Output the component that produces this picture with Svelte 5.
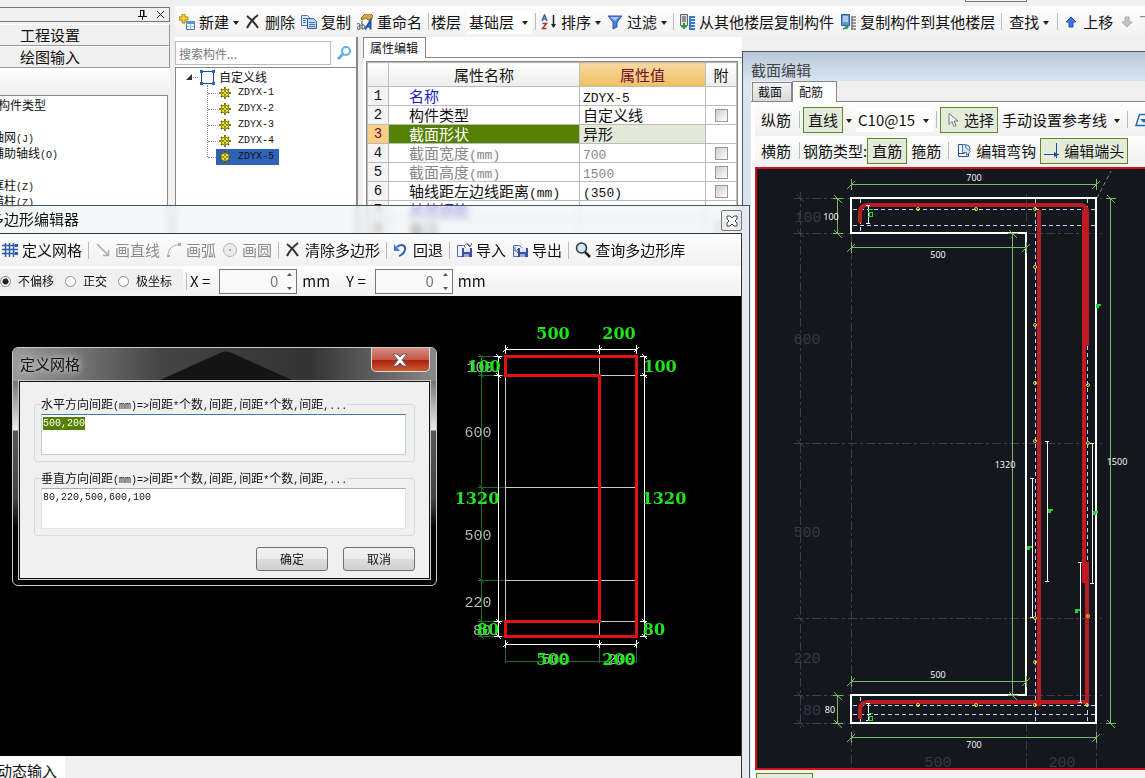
<script>
  import { onMount } from 'svelte';

  let horizontal = $state('500,200');
  let vertical = $state('80,220,500,600,100');
  let offsetMode = $state('none');
  let offsetX = $state(0);
  let offsetY = $state(0);
  let selected = $state('ZDYX-5');
  let horizontalBox;

  const components = ['ZDYX-1', 'ZDYX-2', 'ZDYX-3', 'ZDYX-4', 'ZDYX-5'];
  const navItems = ['构件类型', '', '轴网(J)', '辅助轴线(O)', '', '框柱(Z)', '暗柱(Z)'];

  const properties = [
    { name: '名称', value: 'ZDYX-5', kind: 'link' },
    { name: '构件类型', value: '自定义线', check: true },
    { name: '截面形状', value: '异形', kind: 'current' },
    { name: '截面宽度(mm)', value: '700', kind: 'muted', check: true },
    { name: '截面高度(mm)', value: '1500', kind: 'muted', check: true },
    { name: '轴线距左边线距离(mm)', value: '(350)', check: true },
    { name: '其他钢筋', value: '', kind: 'link' },
    { name: '备注', value: '', check: true },
  ];

  const modes = [
    { value: 'none', label: '不偏移' },
    { value: 'ortho', label: '正交' },
    { value: 'polar', label: '极坐标' },
  ];

  // Polygon editor drawing
  const gridRows = [375, 487, 580, 621];
  const greenTicks = [356, 375, 487, 580, 621, 636];
  const whiteTicks = [356, 375, 621, 636];
  const polyCols = [505, 599, 636];
  const boldLabels = [
    [553, 339, '500'], [619, 339, '200'], [484, 372, '100'], [660, 372, '100'],
    [477, 504, '1320'], [664, 504, '1320'], [488, 635, '80'], [654, 635, '80'],
    [553, 665, '500'], [619, 665, '200'],
  ];
  const thinLabels = [
    [480, 372, '100'], [478, 437, '600'], [478, 540, '500'], [478, 607, '220'],
    [482, 635, '80'], [555, 664, '500'], [621, 664, '200'],
  ];

  // Section drawing
  const axisRows = [198, 233, 443, 618, 695, 723];
  const axisLabels = [
    [808, 222, '100'], [807, 344, '600'], [807, 537, '500'], [807, 663, '220'],
    [812, 715, '80'], [938, 767, '500'], [1062, 767, '200'],
  ];
  const dims = [
    [851, 184, 1096, 184], [851, 247, 1026, 247], [851, 681, 1026, 681], [851, 737, 1096, 737],
    [837, 198, 837, 233], [837, 695, 837, 723], [1012, 233, 1012, 695], [1110, 198, 1110, 723],
  ];
  const dimLabels = [
    [974, 181, '700'], [831, 220, '100'], [938, 258, '500'], [1005, 468, '1320'],
    [1117, 465, '1500'], [938, 678, '500'], [830, 713, '80'], [974, 748, '700'],
  ];
  const dots = [
    [918, 209], [976, 209], [1035, 209], [1035, 267], [1035, 325], [1035, 383], [1035, 441],
    [1035, 618], [1035, 662], [1035, 705], [1088, 385], [1088, 443], [1088, 616],
    [918, 705], [976, 705], [1087, 705],
  ];
  const brackets = [
    [868, 205, 224], [868, 703, 721], [1047, 441, 582], [1032, 478, 618],
    [1092, 443, 584], [1080, 562, 703],
  ];
  const marks = [[1096, 306], [1048, 511], [1093, 513], [1027, 548], [1075, 611]];

  onMount(() => {
    horizontalBox.focus();
    horizontalBox.select();
  });
</script>

{#snippet mixed(text)}
  {#each text.split(/([\x20-\x7e]+)/) as part, i}{#if i % 2}<span class="latin">{part}</span>{:else}{part}{/if}{/each}
{/snippet}

{#snippet caret()}
  <svg class="caret" width="6" height="4" viewBox="0 0 6 4"><path d="M0 0h6L3 4z" fill="#222" /></svg>
{/snippet}

{#snippet icon(name)}
  <svg class="icon" width="16" height="16" viewBox="0 0 16 16" fill="none" aria-hidden="true">
    {#if name === 'new'}
      <path d="M3 0h3v3h3v3H6v3H3V6H0V3h3z" fill="#f2cf33" stroke="#a8831b" />
      <path d="M7.5 7.5h8v8h-8z" fill="#fff" stroke="#4377b8" />
      <path d="M7 7h9v3H7z" fill="#5b95d8" />
      <path d="M8 12.5h7M11.5 10v5" stroke="#9abce3" />
    {:else if name === 'delete'}
      <path d="M2 2c4 3 8 7 11 12M13 1C9 4 5 8 2 14" stroke="#333" stroke-width="2" />
    {:else if name === 'copy'}
      <path d="M.5 1.500h6l2 2v8h-8z" fill="#dbe9fb" stroke="#4a78b5" />
      <path d="M6.500 4.500h6l3 3v7h-9z" fill="#c4dbf8" stroke="#2b5ca5" />
      <path d="M2 4.500h4M2 6.500h3M2 8.500h3M8 8.500h6M8 10.500h6M8 12.500h6" stroke="#3f74bd" />
    {:else if name === 'rename'}
      <path d="M4 4l4-4h6l2 2-2 4h-3L9 4 5 6z" fill="#d9a93d" stroke="#8a6a1d" />
      <path d="M0 10c3-1 3 0 3 2v3M3 12c-4 0-4 4 0 3M5 7v8c4 0 4-5 0-4" stroke="#444" />
      <path d="M8 15.500l5.500-9v9M10 12.500h4" stroke="#1d4fae" stroke-width="2" />
    {:else if name === 'sort'}
      <path d="M1 7l2.500-6L6 7M2 5h3" stroke="#3763b5" stroke-width="1.500" />
      <path d="M1.500 9.500h4l-4 5h4" stroke="#a33" stroke-width="1.500" />
      <path d="M12.500 1v12" stroke="#222" stroke-width="1.500" />
      <path d="M10 10h5l-2.500 4z" fill="#222" />
    {:else if name === 'filter'}
      <path d="M1 2h14l-5 6v5l-4 2V8z" fill="#4a7fe0" stroke="#2c58ad" />
      <path d="M3 3h9L8 7z" fill="#a9c6fb" />
    {:else if name === 'from'}
      <path d="M1.500.5h7v11h-7z" fill="#ddd" stroke="#666" />
      <path d="M3 3h4M3 5h4M3 7h4" stroke="#444" />
      <path d="M5 9v6M2 12.500h6" stroke="#1d9c45" stroke-width="2" />
      <path d="M10 3h6M10 6h6M10 9h6M10 12h6M10 15h6M11 3v12" stroke="#3c78c8" stroke-width="2" />
    {:else if name === 'to'}
      <path d="M1.500.5h8v11h-8z" fill="#5f94de" stroke="#2a5da8" />
      <path d="M3 3h5M3 5h5M3 7h5" stroke="#fff" />
      <path d="M3 15l5-4v3z" fill="#1d9c45" stroke="#1d9c45" />
      <path d="M11 3h5M11 6h5M11 9h5M11 12h5M11 15h5M12 3v12" stroke="#777" stroke-width="1.500" />
    {:else if name === 'up'}
      <path d="M8 3l5 5h-3v5H6V8H3z" fill="#3f76e4" stroke="#2450ad" />
    {:else if name === 'down'}
      <path d="M8 13L3 8h3V3h4v5h3z" fill="#c4c4c4" stroke="#aaa" />
    {:else if name === 'grid'}
      <path d="M0 3.500h16M0 7.500h16M0 11.500h14M3.500 1v14M7.500 1v14M11.500 1v14" stroke="#2a5caa" stroke-width="1.500" />
      <path d="M13 2h3v3h-3zM13 10h3v3h-3z" fill="#2a5caa" />
    {:else if name === 'line'}
      <path d="M2 2l11 11M13.500 8v5.500H8" stroke="#aaa" stroke-width="1.500" />
    {:else if name === 'arc'}
      <path d="M2 14C2 7 6 3 13 3" stroke="#aaa" />
      <path d="M1 13h3v2H1zM12 1h3v3h-3z" fill="#aaa" />
    {:else if name === 'circle'}
      <circle cx="8" cy="8" r="6.500" fill="#ebebeb" stroke="#b4b4b4" />
      <circle cx="8" cy="8" r="1" fill="#999" />
    {:else if name === 'undo'}
      <path d="M4 5c5-4 9-1 8 3-1 3-3 5-6 6" stroke="#2c62b8" stroke-width="2" />
      <path d="M1 2v7h6z" fill="#3d7ad6" />
    {:else if name === 'import' || name === 'export'}
      <path d="M1.500 3.500h6l2 2v9h-8z" fill="#eef3fb" stroke="#4a6fae" />
      {#if name === 'import'}
        <path d="M8 4c2-3 5-3 6 1M11 2l3 3 2-4" stroke="#555" />
      {:else}
        <path d="M3 5v4h4M5 7l2 2-2 2" stroke="#2a5caa" />
      {/if}
      <path d="M6 6h10v9H6z" fill="#3b50a3" />
      <path d="M8 6h6v4H8z" fill="#dfe6f5" />
      <path d="M8 12h5v3H8z" fill="#9aa8d2" />
    {:else if name === 'search'}
      <circle cx="6.500" cy="6" r="5" fill="#cfe9f8" stroke="#333" stroke-width="1.500" />
      <path d="M10 10l5 5" stroke="#222" stroke-width="2.500" />
    {:else if name === 'find'}
      <circle cx="10" cy="6" r="4" stroke="#5fb0ea" stroke-width="2" />
      <path d="M7 9l-5 5" stroke="#5fb0ea" stroke-width="3" />
    {:else if name === 'pointer'}
      <path d="M5 1.500v11l3-3 2 5 2-1-2-4.500h4z" fill="#fff" stroke="#777" />
    {:else if name === 'hook'}
      <path d="M6.500 1.500h-4v12h10v-3M2.500 10.500h6" stroke="#2a4fa0" />
      <path d="M6.500 1.500h3v3l5 4-4 4v-3h-4z" fill="#d9e5f7" stroke="#4a78b5" />
      <path d="M10 2c3 0 4 2 4 5" stroke="#2a4fa0" />
    {:else if name === 'end'}
      <path d="M0 11.500h15M12.500 0v15" stroke="#1d4f9c" />
      <path d="M10 9l5 2.500L10 14z" fill="#1d4f9c" />
    {:else if name === 'edge'}
      <path d="M4.500 2.500h11M4.500 2.500L1 13.500h14" stroke="#1d6fb0" stroke-width="1.500" />
      <path d="M5 7h7l-3 4z" fill="#1d6fb0" />
    {/if}
  </svg>
{/snippet}

{#snippet tool(name, label, state = '', drop = false)}
  <button class="tool {state}" disabled={state === 'off'}>
    {#if name}{@render icon(name)}{/if}
    {#if label}<span>{label}</span>{/if}
    {#if drop}{@render caret()}{/if}
  </button>
{/snippet}

<div class="app">
  <nav class="nav">
    <div class="nav-head">
      <button class="plain" aria-label="固定">
        <svg width="9" height="10" viewBox="0 0 9 10" fill="none" stroke="#111"><path d="M2.500 0v6M2 .5h4M6 0v6M5.500 0v6M0 6.500h9M4.500 7v3" /></svg>
      </button>
      <button class="plain" aria-label="关闭">
        <svg width="9" height="9" viewBox="0 0 9 9" stroke="#222"><path d="M1 1l7 7M8 1L1 8" /></svg>
      </button>
    </div>
    <button class="nav-button">工程设置</button>
    <button class="nav-button">绘图输入</button>
    <div class="nav-bar"></div>
    <ul class="nav-list small">
      {#each navItems as item, i}
        <li class:first={i === 0}>{@render mixed(item)}</li>
      {/each}
    </ul>
  </nav>

  <main class="main">
    <div class="strip"><span></span></div>
    <div class="toolbar">
      {@render tool('new', '新建', '', true)}
      {@render tool('delete', '删除')}
      {@render tool('copy', '复制')}
      {@render tool('rename', '重命名')}
      <i class="sep"></i>
      <label for="floor">楼层</label>
      <span class="combo">
        <select id="floor"><option>基础层</option></select>
        {@render caret()}
      </span>
      <i class="sep"></i>
      {@render tool('sort', '排序', '', true)}
      {@render tool('filter', '过滤', '', true)}
      <i class="sep"></i>
      {@render tool('from', '从其他楼层复制构件')}
      {@render tool('to', '复制构件到其他楼层')}
      <i class="sep"></i>
      {@render tool('', '查找', 'pad', true)}
      <i class="sep"></i>
      {@render tool('up', '上移')}
      {@render tool('down', '下移', 'off')}
    </div>

    <div class="panels">
      <section class="tree small">
        <div class="search">
          <input type="search" placeholder="搜索构件..." aria-label="搜索构件" />
          <button class="plain" aria-label="搜索">{@render icon('find')}</button>
        </div>
        <div class="tree-box">
          <div class="root">
            <svg width="7" height="7" viewBox="0 0 7 7"><path d="M6 0v6H0z" fill="#333" /></svg>
            <svg width="22" height="15" viewBox="0 0 22 15" fill="none">
              <path d="M0 7.500h5" stroke="#888" stroke-dasharray="1 1" />
              <path d="M8.500 1.500h12v12h-12z" stroke="#1a4fa0" />
              <path d="M7 0h3v3H7zM19 0h3v3h-3zM7 12h3v3H7zM19 12h3v3h-3z" fill="#2a62b8" />
            </svg>
            <span>自定义线</span>
          </div>
          <ul>
            {#each components as name}
              <li>
                <button class="node" class:active={selected === name} onclick={() => (selected = name)}>
                  <svg width="12" height="12" viewBox="0 0 12 12">
                    <path d="M6 0v12M0 6h12M2 2l8 8M10 2l-8 8" stroke="#4a4700" stroke-width="1.500" />
                    <circle cx="6" cy="6" r="4" fill="#f0e92e" stroke="#8a8400" />
                    <path d="M6 3v6M3 6h6" stroke="#3a3800" />
                    <circle cx="6" cy="6" r="1" fill="#fff86b" />
                  </svg>
                  <span class="latin">{name}</span>
                </button>
              </li>
            {/each}
          </ul>
        </div>
      </section>

      <section class="props">
        <div class="tabs"><button class="tab active">属性编辑</button></div>
        <div class="table-box">
          <table>
            <thead>
              <tr><th class="num"></th><th>属性名称</th><th class="value">属性值</th><th class="extra">附</th></tr>
            </thead>
            <tbody>
              {#each properties as row, i}
                <tr class={row.kind}>
                  <td class="num">{i + 1}</td>
                  <td class="name">{@render mixed(row.name)}</td>
                  <td class="value">{@render mixed(row.value)}</td>
                  <td class="extra">{#if row.check}<input type="checkbox" aria-label="附加 {row.name}" />{/if}</td>
                </tr>
              {/each}
            </tbody>
          </table>
        </div>
      </section>
    </div>
  </main>

  <!-- Section editor window -->
  <section class="window section-editor">
    <h2>截面编辑</h2>
    <div class="section-body">
      <div class="tabs">
        <button class="tab">截面</button>
        <button class="tab active">配筋</button>
      </div>
      <div class="section-page">
        <div class="toolbar">
          <span class="caption">纵筋</span>
          <i class="sep"></i>
          {@render tool('', '直线', 'on pad')}
          {@render caret()}
          <span class="combo bar">
            <select aria-label="钢筋规格"><option>C10@15</option></select>
            {@render caret()}
          </span>
          <i class="sep"></i>
          {@render tool('pointer', '选择', 'on')}
          {@render tool('', '手动设置参考线', 'wide', true)}
          <i class="sep"></i>
          {@render tool('edge', '')}
        </div>
        <div class="toolbar">
          <span class="caption">横筋</span>
          <i class="sep"></i>
          <span>钢筋类型:</span>
          {@render tool('', '直筋', 'on pad')}
          {@render tool('', '箍筋')}
          <i class="sep"></i>
          {@render tool('hook', '编辑弯钩')}
          {@render tool('end', '编辑端头', 'on')}
        </div>
        <div class="section-canvas">
          <svg width="100%" height="100%">
            <g transform="translate(-757 -169)" fill="none">
              <g stroke="#3b3f46" stroke-dasharray="9 3 3 3">
                {#each axisRows as y}
                  <path d="M794 {y + 0.5}H1102" />
                {/each}
                <path d="M800.500 192V728M851.500 233V768M1026.500 194V233M1026.500 723V768M1096.500 723V768" />
              </g>
              <g stroke="#3b3f46">
                {#each axisRows as y}
                  <path d="M797 {y - 3}l7 7" />
                {/each}
              </g>
              <g class="axis-text">
                {#each axisLabels as [x, y, text]}
                  <text {x} {y}>{text}</text>
                {/each}
              </g>
              <path d="M1097 198l14-27" stroke="#888" stroke-dasharray="4 3" />
              <path d="M851 198H1096V723H851V695H1026V233H851Z" stroke="#fff" stroke-width="2" />
              <g stroke="#bcd3ee" stroke-dasharray="4 3">
                <path d="M853 209.500H1095M853 225.500H1095M853 705.500H1095M853 714.500H1095" />
                <path d="M860.500 199V233M860.500 697V722M1035.500 199V722M1087.500 199V722" />
              </g>
              <g stroke="#b91d24" stroke-width="4">
                <path d="M860 223V212Q860 205 868 205H1080Q1087 205 1087 212V346" />
                <path d="M860 719V710Q860 702 868 702H1087V562" />
                <path d="M1039 210V706" />
                <path d="M1084 210V583" stroke="#c8171f" />
              </g>
              <g stroke="#76b966">
                {#each dims as [x1, y1, x2, y2]}
                  <path d="M{x1 + 0.5} {y1 + 0.5}L{x2 + 0.5} {y2 + 0.5}" />
                  {#each [[x1, y1], [x2, y2]] as [x, y]}
                    {#if y1 === y2}
                      <path d="M{x + 0.5} {y - 5}v11M{x - 4} {y + 5}l8 -8" />
                    {:else}
                      <path d="M{x - 4} {y + 0.5}h10M{x - 3} {y - 3}l8 8" />
                    {/if}
                  {/each}
                {/each}
              </g>
              <g stroke="#fff">
                {#each brackets as [x, top, bottom]}
                  <path d="M{x - 2} {top + 0.5}h4M{x + 0.5} {top}V{bottom}M{x - 2} {bottom - 0.5}h4" />
                {/each}
              </g>
              <g stroke="#f1d33a">
                {#each dots as [cx, cy]}
                  <circle {cx} {cy} r="1.500" />
                {/each}
              </g>
              <g stroke="#22d43a">
                {#each marks as [x, y]}
                  <path d="M{x} {y - 1}h5M{x} {y + 1}h3" stroke-width="2" />
                {/each}
                <path d="M868 209.500h5M868 212.500h5M868 216.500h5M869.500 212v5M872.500 212v5M868 713.500h5M868 716.500h5M868 720.500h5M869.500 716v5M872.500 716v5" />
              </g>
              <g class="dim-text">
                {#each dimLabels as [x, y, text]}
                  <text {x} {y}>{text}</text>
                {/each}
              </g>
            </g>
          </svg>
        </div>
        <div class="section-foot"><span></span></div>
      </div>
    </div>
  </section>

  <!-- Polygon editor window -->
  <section class="window polygon-editor">
    <header>
      <h2>多边形编辑器</h2>
      <button class="close" aria-label="关闭">
        <svg width="12" height="12" viewBox="0 0 12 12"><path d="M1 1h3l2 2 2-2h3v3L9 6l2 2v3H8L6 9l-2 2H1V8l2-2-2-2z" fill="#fff" stroke="#444" /></svg>
      </button>
    </header>
    <div class="polygon-body">
      <div class="toolbar">
        {@render tool('grid', '定义网格')}
        <i class="sep"></i>
        {@render tool('line', '画直线', 'off')}
        {@render tool('arc', '画弧', 'off')}
        {@render tool('circle', '画圆', 'off')}
        <i class="sep"></i>
        {@render tool('delete', '清除多边形')}
        <i class="sep"></i>
        {@render tool('undo', '回退')}
        <i class="sep"></i>
        {@render tool('import', '导入')}
        {@render tool('export', '导出')}
        <i class="sep"></i>
        {@render tool('search', '查询多边形库')}
      </div>
      <div class="toolbar coords">
        <div class="modes">
          {#each modes as mode}
            <label><input type="radio" name="mode" value={mode.value} bind:group={offsetMode} />{mode.label}</label>
          {/each}
        </div>
        <i class="sep"></i>
        <label for="dx">X =</label>
        <span class="spin">
          <input id="dx" type="number" bind:value={offsetX} />
          <svg width="7" height="19" viewBox="0 0 7 19"><path d="M1 4h5L3.500 1zM1 15h5l-2.500 3z" fill="#555" /></svg>
        </span>
        <span class="unit">mm</span>
        <label for="dy">Y =</label>
        <span class="spin">
          <input id="dy" type="number" bind:value={offsetY} />
          <svg width="7" height="19" viewBox="0 0 7 19"><path d="M1 4h5L3.500 1zM1 15h5l-2.500 3z" fill="#555" /></svg>
        </span>
        <span>mm</span>
      </div>
      <div class="polygon-canvas">
        <svg width="100%" height="100%">
          <g transform="translate(0 -296)" fill="none">
            <g stroke="#1f6b26">
              <path d="M481.500 356V637M505.500 640V663M599.500 640V663M636.500 640V663M505 661.500H637" />
              {#each greenTicks as y}
                <path d="M478 {y + 0.5}H505M479 {y - 2}l5 5" />
              {/each}
            </g>
            <g class="thin-text">
              {#each thinLabels as [x, y, text]}
                <text {x} {y}>{text}</text>
              {/each}
            </g>
            <g stroke="#c8c8c8">
              <path d="M505.500 356V636M599.500 356V636" />
              {#each gridRows as y}
                <path d="M505 {y + 0.5}H636" />
              {/each}
            </g>
            <g stroke="#fff">
              <path d="M505 349.500H637M505 644.500H637M498.500 356V637M644.500 356V637" />
              {#each polyCols as x}
                <path d="M{x + 0.5} 345v9M{x - 2} 352l5 -5M{x + 0.5} 640v8M{x - 2} 647l5 -5" />
              {/each}
              {#each whiteTicks as y}
                <path d="M494 {y + 0.5}h8M496 {y - 2}l5 5M640 {y + 0.5}h7M642 {y - 2}l5 5" />
              {/each}
            </g>
            <path d="M505.500 356.500H636.500V636.500H505.500V621.500H599.500V375.500H505.500Z" stroke="#e3120f" stroke-width="3" />
            <g class="bold-text">
              {#each boldLabels as [x, y, text]}
                <text {x} {y}>{text}</text>
              {/each}
            </g>
          </g>
        </svg>
      </div>
      <div class="status"><button>动态输入</button></div>
    </div>
  </section>

  <!-- Grid dialog -->
  <form class="dialog small" onsubmit={(e) => e.preventDefault()}>
    <header>
      <h2>定义网格</h2>
      <svg class="chevron" width="136" height="31" viewBox="0 0 136 31"><path d="M0 31L62 3Q68 0 74 3L136 31z" fill="#141414" /></svg>
      <button type="button" class="close" aria-label="关闭">
        <svg width="16" height="14" viewBox="0 0 16 14"><path d="M1 1h4l3 3 3-3h4l-5 6 5 6h-4L8 10l-3 3H1l5-6z" fill="#fff" stroke="#5a5a70" /></svg>
      </button>
    </header>
    <div class="dialog-body">
      <fieldset>
        <legend><label for="hgrid">{@render mixed('水平方向间距(mm)=>间距*个数,间距,间距*个数,间距,...')}</label></legend>
        <textarea id="hgrid" bind:this={horizontalBox} bind:value={horizontal}></textarea>
      </fieldset>
      <fieldset>
        <legend><label for="vgrid">{@render mixed('垂直方向间距(mm)=>间距*个数,间距,间距*个数,间距,...')}</label></legend>
        <textarea id="vgrid" bind:value={vertical}></textarea>
      </fieldset>
      <div class="actions">
        <button type="submit">确定</button>
        <button type="button">取消</button>
      </div>
    </div>
  </form>
</div>

<style>
  :global(body) {
    margin: 0;
    overflow: hidden;
  }

  .app {
    position: relative;
    display: flex;
    height: 100vh;
    overflow: hidden;
    background: #f0f0f0;
    color: #111;
    font: 15px/20px 'Noto Sans CJK SC', sans-serif;
    white-space: nowrap;
  }

  .app :global(*) {
    box-sizing: border-box;
  }

  button,
  input,
  select,
  textarea {
    margin: 0;
    padding: 0;
    border: 0;
    background: none;
    color: inherit;
    font: inherit;
  }

  h2 {
    margin: 0;
    font-size: 15px;
    font-weight: 400;
    line-height: 20px;
  }

  ul {
    margin: 0;
    padding: 0;
    list-style: none;
  }

  svg {
    display: block;
    flex: none;
  }

  .small {
    font-size: 12px;
    line-height: 16px;
  }

  .latin {
    font-family: 'Liberation Mono', monospace;
    font-size: 13px;
    line-height: 1;
  }

  .small .latin {
    font-size: 10px;
  }

  .plain {
    display: flex;
    align-items: center;
  }

  /* Left navigation */
  .nav {
    display: flex;
    flex: none;
    flex-direction: column;
    width: 186px;
    margin-left: -16px;
    padding-top: 7px;
  }

  .nav-head {
    display: flex;
    justify-content: flex-end;
    align-items: center;
    gap: 9px;
    height: 15px;
    padding-right: 4px;
    border: 1px solid #777;
  }

  .nav-button {
    height: 22px;
    padding-left: 35px;
    border: 1px solid #999;
    border-top-color: #fff;
    text-align: left;
    line-height: 18px;
  }

  .nav-head + .nav-button {
    margin-top: 2px;
  }

  .nav-bar {
    height: 27px;
    background: linear-gradient(#fff, #eee);
  }

  .nav-list {
    flex: 1;
    margin-right: 2px;
    padding: 1px 0 0 8px;
    border: 1px solid #888;
    border-width: 1px 1px 0 0;
    background: #fff;
  }

  .nav-list li {
    height: 16px;
  }

  .nav-list .first {
    padding-left: 6px;
  }

  /* Main area */
  .main {
    display: flex;
    flex: 1;
    flex-direction: column;
    min-width: 0;
    padding-left: 5px;
  }

  .strip {
    display: flex;
    justify-content: flex-end;
    height: 6px;
    padding-right: 118px;
  }

  .strip span {
    width: 62px;
    height: 2px;
    border: 1px solid #777;
    border-top: 0;
  }

  .toolbar {
    display: flex;
    align-items: center;
    height: 31px;
    overflow: hidden;
    background: linear-gradient(#fdfdfd, #f1f1f1);
  }

  .main .toolbar {
    padding-left: 1px;
  }

  .tool {
    display: flex;
    flex: none;
    align-items: center;
    gap: 4px;
    height: 26px;
    padding: 0 3px;
    border: 1px solid transparent;
  }

  .main .tool {
    padding: 0 2px;
  }

  .tool.on {
    border-color: #5d8a1e;
    background: #e4ebdb;
  }

  .tool.off {
    color: #8c8c8c;
  }

  .tool.wide {
    gap: 7px;
  }

  .tool.pad {
    padding: 0 4px;
  }

  .sep {
    flex: none;
    width: 1px;
    height: 17px;
    margin: 0 3px;
    background: #bbb;
  }

  .main .sep {
    margin: 0 2px 0 3px;
  }

  .caret {
    margin-top: 2px;
  }

  .combo {
    display: flex;
    flex: none;
    align-items: center;
    gap: 8px;
    height: 24px;
    margin-left: 6px;
    padding: 0 4px 0 2px;
    background: #fff;
  }

  .combo select {
    width: 45px;
    appearance: none;
  }

  .panels {
    display: flex;
    flex: 1;
    min-height: 0;
  }

  .tree {
    display: flex;
    flex: none;
    flex-direction: column;
    width: 183px;
    padding-top: 4px;
    border-right: 2px solid #888;
    background: #fff;
  }

  .search {
    display: flex;
    align-items: center;
    gap: 5px;
    height: 24px;
  }

  .search input {
    flex: 1;
    min-width: 0;
    height: 24px;
    padding: 0 3px;
    border: 1px solid #bbb;
  }

  .search input::placeholder {
    color: #777;
    opacity: 1;
  }

  .search button {
    width: 20px;
  }

  .tree-box {
    flex: 1;
    margin-top: 2px;
    border: 1px solid #888;
    border-width: 1px 0 0 1px;
  }

  .root {
    display: flex;
    align-items: center;
    padding: 1px 0 0 10px;
    height: 17px;
  }

  .root span {
    margin-left: 4px;
  }

  .tree-box ul {
    margin-left: 31px;
    border-left: 1px dotted #888;
    height: 72px;
  }

  .tree-box li {
    display: flex;
    align-items: center;
    height: 16px;
  }

  .tree-box li::before {
    content: '';
    width: 8px;
    border-top: 1px dotted #888;
  }

  .node {
    display: flex;
    align-items: center;
    gap: 7px;
    height: 16px;
    padding: 0 5px 0 3px;
  }

  .node.active {
    background: #2f63b8;
  }

  .props {
    display: flex;
    flex: none;
    flex-direction: column;
    width: 379px;
    margin-left: 5px;
    background: #fff;
  }

  .tabs {
    display: flex;
    flex: none;
    align-items: flex-end;
    height: 21px;
    border-bottom: 1px solid #888;
  }

  .tab {
    height: 19px;
    padding: 0 9px 0 5px;
    border: 1px solid #888;
    border-bottom: 0;
    background: linear-gradient(#f4f4f4, #d8d8d8);
    font-size: 12px;
    line-height: 16px;
  }

  .tab.active {
    height: 21px;
    margin-bottom: -1px;
    background: #fff;
  }

  .props .tab {
    padding: 0 7px 0 6px;
  }

  .table-box {
    flex: 1;
    margin: 3px 4px 0 3px;
    overflow: hidden;
    border: 1px solid #888;
    border-width: 1px 1px 0 1px;
  }

  table {
    width: 100%;
    table-layout: fixed;
    border-collapse: collapse;
  }

  th,
  td {
    height: 19px;
    padding: 0;
    border: 1px solid #bcbcbc;
    font-weight: 400;
    line-height: 18px;
  }

  th {
    height: 24px;
    background: linear-gradient(#fff, #ececec);
  }

  th.value {
    width: 126px;
    background: linear-gradient(#f8d9a0, #efbe62);
    color: #6b0d2e;
  }

  th.extra {
    width: 31px;
  }

  .num {
    width: 21px;
    text-align: center;
  }

  td.num {
    background: #f4f4f4;
    font: 14px/18px 'Liberation Mono', monospace;
  }

  .name {
    padding-left: 20px;
  }

  td.value {
    padding-left: 3px;
  }

  td.extra {
    text-align: center;
  }

  .link .name {
    color: #1a1ac4;
  }

  .muted .name,
  .muted td.value {
    color: #888;
  }

  .current .num {
    background: #fbcf86;
    color: #6b0d2e;
  }

  .current .name {
    background: #558000;
    color: #fff;
  }

  .current td.value {
    background: #e3eada;
  }

  input[type='checkbox'] {
    display: block;
    width: 13px;
    height: 13px;
    margin: 0 auto;
    border: 1px solid #999;
    background: linear-gradient(135deg, #ccc, #fff);
    appearance: none;
  }

  /* Section editor */
  .window {
    position: absolute;
    display: flex;
    flex-direction: column;
    border: 1px solid #4c5661;
  }

  .section-editor {
    top: 51px;
    right: -1px;
    bottom: 0;
    width: 404px;
    padding-left: 8px;
    border-bottom: 0;
    background: linear-gradient(#b8c8d9, #d9e5f1 30px);
  }

  .section-editor h2 {
    height: 29px;
    padding-top: 8px;
    color: #444;
  }

  .section-body {
    display: flex;
    flex: 1;
    flex-direction: column;
    min-height: 0;
    background: #f0f0f0;
  }

  .section-body > .tabs {
    padding-left: 1px;
  }

  .section-body .active {
    padding: 0 13px 0 6px;
  }

  .section-page {
    display: flex;
    flex: 1;
    flex-direction: column;
    min-height: 0;
    padding: 3px 0 0 4px;
    background: #fff;
  }

  .section-page .toolbar {
    flex: none;
    height: 31px;
    padding: 0 0 2px 6px;
  }

  .caption {
    margin-right: 5px;
  }

  .section-page .tool.on + .caret {
    margin-left: 3px;
  }

  .combo.bar {
    gap: 5px;
    margin-left: 4px;
  }

  .combo.bar select {
    width: 60px;
  }

  .section-canvas {
    flex: 1;
    min-height: 0;
    overflow: hidden;
    border: 2px solid #cc1418;
    border-right: 0;
    background: #14171e;
  }

  .section-foot {
    flex: none;
    height: 8px;
    padding: 3px 0 0 1px;
    overflow: hidden;
    background: #f4f4f4;
  }

  .section-foot span {
    display: block;
    width: 57px;
    height: 26px;
    border: 1px solid #5d8a1e;
    background: #e4ebdb;
  }

  text {
    text-anchor: middle;
  }

  .axis-text {
    fill: #363a41;
    font: 15px 'Liberation Mono', monospace;
  }

  .dim-text {
    fill: #fff;
    font: 9px 'Open Sans', sans-serif;
  }

  /* Polygon editor */
  .polygon-editor {
    top: 205px;
    right: 395px;
    bottom: 0;
    left: -16px;
    padding-right: 7px;
    border-bottom: 0;
    background: rgba(238, 241, 244, 0.6);
    backdrop-filter: blur(3px);
  }

  .polygon-editor header {
    display: flex;
    flex: none;
    justify-content: space-between;
    align-items: center;
    height: 27px;
    padding-left: 4px;
  }

  .polygon-editor h2 {
    padding-bottom: 2px;
  }

  .polygon-editor .close {
    display: flex;
    justify-content: center;
    align-items: center;
    width: 21px;
    height: 21px;
    margin-top: 2px;
    border: 1px solid #777;
    border-radius: 2px;
  }

  .polygon-body {
    display: flex;
    flex: 1;
    flex-direction: column;
    min-height: 0;
    padding-left: 15px;
    border: 1px solid #333;
    border-width: 1px 1px 0 0;
    background: #f8f8f8;
  }

  .polygon-body .toolbar {
    flex: none;
    height: 32px;
    padding: 0 12px 0 1px;
  }

  .polygon-body .tool {
    padding: 0 2px;
  }

  .polygon-body .tool:first-child {
    padding-left: 0;
  }

  .polygon-body .coords {
    height: 30px;
    padding-left: 0;
  }

  .modes {
    display: flex;
    align-items: center;
    height: 24px;
    background: #f0f0f0;
    font-size: 12px;
  }

  .modes label {
    display: flex;
    align-items: center;
    gap: 7px;
    margin-right: 11px;
  }

  input[type='radio'] {
    width: 11px;
    height: 11px;
    border: 1px solid #8a8a8a;
    border-radius: 50%;
    background: #fff;
    appearance: none;
  }

  input[type='radio']:checked {
    background: radial-gradient(#222 40%, #fff 55%);
  }

  .spin {
    display: flex;
    align-items: center;
    gap: 8px;
    width: 78px;
    height: 25px;
    margin: 0 5px 0 9px;
    padding: 0 3px;
    border: 1px solid #777;
    background: #fafafa;
    color: #777;
  }

  .spin input {
    flex: 1;
    min-width: 0;
    text-align: right;
    appearance: textfield;
  }

  .spin input::-webkit-inner-spin-button {
    appearance: none;
  }

  .unit {
    margin-right: 16px;
  }

  .polygon-canvas {
    flex: 1;
    min-height: 0;
    overflow: hidden;
    background: #000;
  }

  .thin-text {
    fill: #b4b4b4;
    font: 15px 'Liberation Mono', monospace;
  }

  .bold-text {
    fill: #1ee51e;
    font: bold 16px 'DejaVu Serif', serif;
  }

  .status {
    flex: none;
    height: 22px;
    overflow: hidden;
    background: #f0f0f0;
  }

  .status button {
    height: 30px;
    margin-left: -3px;
    padding-right: 8px;
    background: #fff;
  }

  /* Grid dialog */
  .dialog {
    position: absolute;
    top: 347px;
    left: 12px;
    width: 425px;
    padding: 0 6px 6px;
    border: 1px solid #ccc;
    border-radius: 6px;
    background: linear-gradient(#555, #777 34px, #eee 82px, #555 83px, #444 150px, #000 180px);
  }

  .dialog header {
    display: flex;
    justify-content: space-between;
    align-items: flex-start;
    height: 33px;
    margin: 0 -6px;
    padding: 0 6px 0 7px;
    border-radius: 5px 5px 0 0;
    background: linear-gradient(90deg, #999, #444 35%, #333 70%, #888);
  }

  .dialog h2 {
    margin-top: 6px;
    text-shadow: 0 0 6px #ddd, 0 0 12px #ccc;
  }

  .chevron {
    margin-top: 2px;
  }

  .dialog .close {
    display: flex;
    justify-content: center;
    align-items: center;
    width: 59px;
    height: 24px;
    border: 1px solid #ddd;
    border-top: 0;
    border-radius: 0 0 5px 5px;
    background: linear-gradient(#d98d80, #c4594a 50%, #a81e0c 51%, #cf5a35);
  }

  .dialog-body {
    padding: 14px 14px 7px;
    border: 1px solid #111;
    outline: 1px solid #ccc;
    background: #f0f0f0;
  }

  fieldset {
    min-width: 0;
    margin: 0 0 8px;
    padding: 2px 8px 6px 6px;
    border: 1px solid #d5dce0;
    border-radius: 3px;
  }

  legend {
    padding: 0;
    height: 16px;
  }

  textarea {
    display: block;
    width: 100%;
    height: 41px;
    padding: 2px 1px;
    border: 1px solid #e2e3ea;
    border-top-color: #abadb3;
    background: #fff;
    font: 10px/13px 'Liberation Mono', monospace;
    resize: none;
    outline: 0;
  }

  textarea:focus {
    border-color: #b5cfe7;
    border-top-color: #3d7bad;
  }

  textarea::selection {
    background: #558000;
    color: #fff;
  }

  .actions {
    display: flex;
    justify-content: flex-end;
    gap: 15px;
    padding-top: 3px;
  }

  .actions button {
    width: 72px;
    height: 24px;
    border: 1px solid #707070;
    border-radius: 3px;
    background: linear-gradient(#f2f2f2, #ebebeb 50%, #ddd 51%, #cfcfcf);
  }
</style>
